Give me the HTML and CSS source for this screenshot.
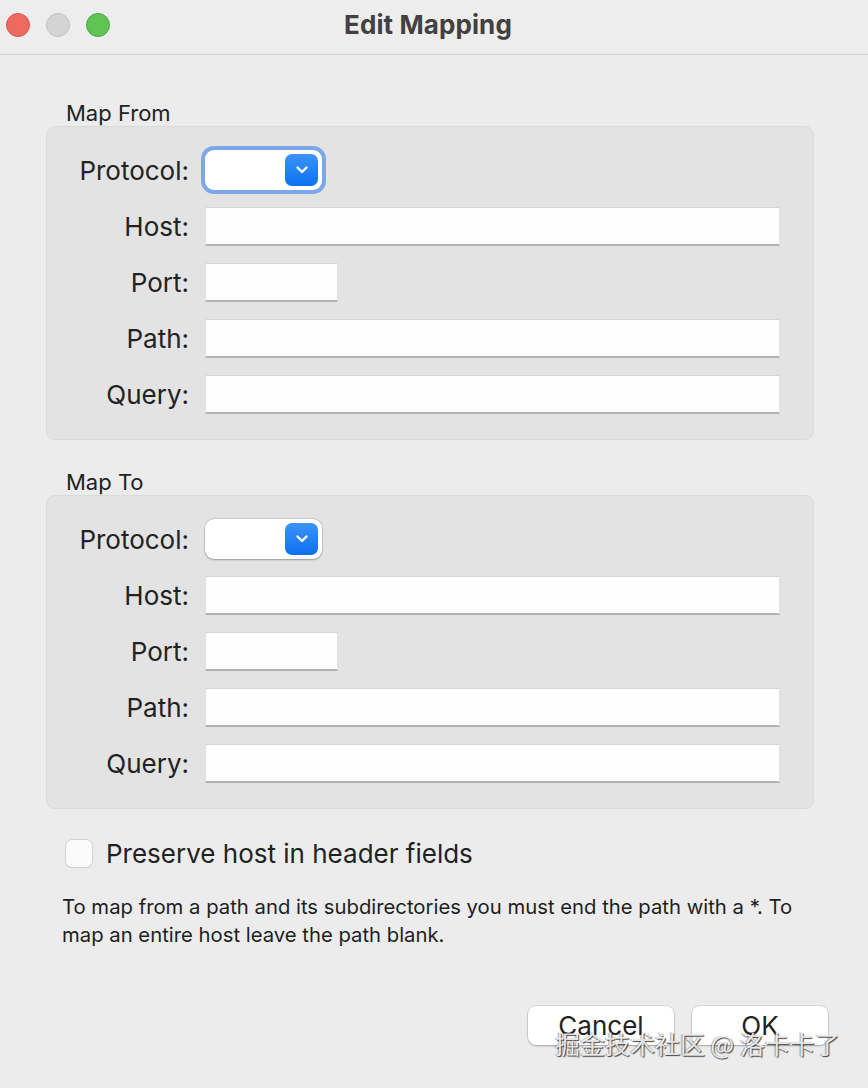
FILE: index.html
```html
<!DOCTYPE html>
<html lang="en">
<head>
<meta charset="utf-8">
<title>Edit Mapping</title>
<link rel="stylesheet" href="styles.css">
</head>
<body>
<div class="window">
  <header class="titlebar">
    <div class="lights">
      <span class="light red"></span>
      <span class="light grey"></span>
      <span class="light green"></span>
    </div>
    <h1 class="title">Edit Mapping</h1>
  </header>

  <main class="content">
    <section class="section first">
      <h2 class="section-label">Map From</h2>
      <div class="group">
        <div class="row">
          <label class="label">Protocol:</label>
          <div class="popup focused"><span class="popup-btn"><svg width="14" height="10" viewBox="0 0 14 10"><path d="M2.5 2.5 L7 7 L11.5 2.5" fill="none" stroke="#fff" stroke-width="2.4" stroke-linecap="round" stroke-linejoin="round"/></svg></span></div>
        </div>
        <div class="row"><label class="label">Host:</label><div class="field wide"></div></div>
        <div class="row"><label class="label">Port:</label><div class="field short"></div></div>
        <div class="row"><label class="label">Path:</label><div class="field wide"></div></div>
        <div class="row"><label class="label">Query:</label><div class="field wide"></div></div>
      </div>
    </section>

    <section class="section second">
      <h2 class="section-label">Map To</h2>
      <div class="group">
        <div class="row">
          <label class="label">Protocol:</label>
          <div class="popup"><span class="popup-btn"><svg width="14" height="10" viewBox="0 0 14 10"><path d="M2.5 2.5 L7 7 L11.5 2.5" fill="none" stroke="#fff" stroke-width="2.4" stroke-linecap="round" stroke-linejoin="round"/></svg></span></div>
        </div>
        <div class="row"><label class="label">Host:</label><div class="field wide"></div></div>
        <div class="row"><label class="label">Port:</label><div class="field short"></div></div>
        <div class="row"><label class="label">Path:</label><div class="field wide"></div></div>
        <div class="row"><label class="label">Query:</label><div class="field wide"></div></div>
      </div>
    </section>

    <div class="check-row">
      <span class="checkbox"></span>
      <span class="check-label">Preserve host in header fields</span>
    </div>

    <p class="hint">To map from a path and its subdirectories you must end the path with a *. To map an entire host leave the path blank.</p>

    <div class="buttons">
      <button class="btn cancel">Cancel</button>
      <button class="btn ok">OK</button>
    </div>
  </main>
  <div class="watermark">掘金技术社区 @ 洛卡卡了</div>
</div>
</body>
</html>
```

FILE: styles.css
```css
* { box-sizing: border-box; }
html, body { margin: 0; padding: 0; }
body {
  width: 868px;
  height: 1088px;
  background: #ececec;
  font-family: Inter, "Liberation Sans", sans-serif;
  color: #222;
  overflow: hidden;
}
.window {
  position: relative;
  width: 868px;
  height: 1088px;
  background: #ececec;
}
.titlebar {
  position: relative;
  height: 55px;
  border-bottom: 1px solid #d3d3d3;
  background: #ededed;
  display: flex;
  align-items: center;
  justify-content: center;
  padding: 0 12px 5px 0;
}
.lights {
  position: absolute;
  left: 6px;
  top: 13px;
  display: flex;
  gap: 16px;
}
.light {
  width: 24px;
  height: 24px;
  border-radius: 50%;
  display: block;
}
.light.red { background: #ec6a5e; border: 1px solid #d7564b; }
.light.grey { background: #d4d4d4; border: 1px solid #c2c2c2; }
.light.green { background: #5fc454; border: 1px solid #4aa93f; }
.title {
  margin: 0;
  font-size: 26px;
  font-weight: 700;
  color: #414141;
  letter-spacing: 0.1px;
}
.content {
  padding: 0 54px 0 46px;
}
.section-label {
  margin: 0;
  padding-left: 20px;
  font-size: 22px;
  font-weight: 400;
  line-height: 26px;
  height: 26px;
  color: #222;
}
.section.first { margin-top: 45px; }
.section.second { margin-top: 29px; }
.group {
  background: #e3e3e3;
  border: 1px solid #dadada;
  border-radius: 9px;
  padding: 23px 33px 25px 0;
  display: flex;
  flex-direction: column;
  gap: 17px;
}
.row {
  display: grid;
  grid-template-columns: 142px 1fr;
  column-gap: 16px;
  align-items: center;
  height: 39px;
}
.row:first-child { height: 40px; }
.label {
  text-align: right;
  font-size: 26px;
  color: #222;
}
.field {
  height: 39px;
  background: #fefefe;
  border-top: 1px solid #d6d6d6;
  border-left: 1px solid #e2e2e2;
  border-right: 1px solid #e2e2e2;
  border-bottom: 2px solid #b3b3b3;
}
.field.short { width: 133px; }
.popup {
  position: relative;
  width: 117px;
  height: 40px;
  background: #fff;
  border-radius: 9px;
  box-shadow: 0 0 0 0.5px rgba(0,0,0,0.18), 0 1px 2px rgba(0,0,0,0.25);
}
.popup.focused {
  box-shadow: 0 0 0 4px #7ea7e8, 0 0 0 1px rgba(0,0,0,0.1);
  border-radius: 9px;
}
.popup-btn {
  position: absolute;
  right: 4px;
  top: 4px;
  width: 33px;
  height: 32px;
  border-radius: 7px;
  background: linear-gradient(#3d93f8, #0b71f0);
  display: flex;
  align-items: center;
  justify-content: center;
}
.check-row {
  margin-top: 30px;
  padding-left: 20px;
  display: flex;
  align-items: center;
  gap: 14px;
  height: 28px;
}
.checkbox {
  width: 26px;
  height: 27px;
  background: #fbfbfb;
  border-radius: 6px;
  box-shadow: 0 0 0 1px #d3d3d3, 0 1px 1px rgba(0,0,0,0.12);
}
.check-label {
  font-size: 26px;
  color: #222;
}
.hint {
  margin: 26px 0 0 16px;
  font-size: 20.3px;
  line-height: 28px;
  color: #1e1e1e;
  width: 755px;
}
.buttons {
  margin-top: 57px;
  display: flex;
  justify-content: flex-end;
  gap: 18px;
  margin-right: -14px;
}
.btn {
  height: 39px;
  background: #fff;
  border: none;
  border-radius: 8px;
  box-shadow: 0 0 0 0.5px rgba(0,0,0,0.15), 0 1px 2px rgba(0,0,0,0.25);
  font-family: inherit;
  font-size: 26px;
  color: #222;
  padding: 0;
}
.btn.cancel { width: 146px; }
.btn.ok { width: 136px; }
.watermark {
  position: absolute;
  left: 555px;
  top: 1027px;
  font-size: 25px;
  line-height: 32px;
  font-family: "Noto Sans CJK SC", sans-serif;
  color: rgba(255,255,255,0.85);
  text-shadow: 1px 1px 1px rgba(0,0,0,0.7), -1px 0 1px rgba(0,0,0,0.35);
  white-space: nowrap;
}
```
